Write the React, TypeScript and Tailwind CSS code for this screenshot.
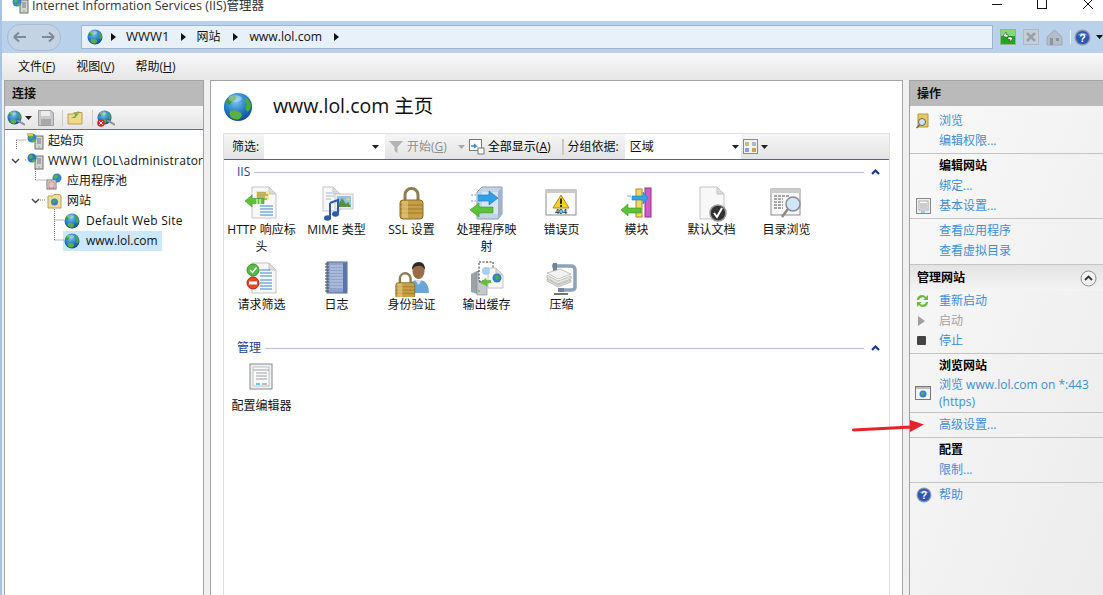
import React, { useId } from "react";

const Globe = ({ size = 16 }: { size?: number }) => {
  const id = useId();
  return (
    <svg width={size} height={size} viewBox="0 0 32 32" className="shrink-0">
      <defs>
        <radialGradient id={id} cx="0.42" cy="0.3" r="0.8">
          <stop offset="0" stopColor="#7cc6ee" />
          <stop offset="0.55" stopColor="#1f77c4" />
          <stop offset="1" stopColor="#0c3d86" />
        </radialGradient>
      </defs>
      <circle cx="16" cy="16" r="15" fill={`url(#${id})`} />
      <path d="M6 6 Q11 3 14 5 L13 9 Q9 9 8 13 Q5 14 3 12 Q4 8 6 6Z" fill="#3f9a33" />
      <path d="M24 5 Q29 9 30 15 Q29 20 26 21 Q23 17 25 13 Q22 9 24 5Z" fill="#4ea83a" />
      <path d="M8 20 Q14 18 19 22 Q22 25 17 29 Q11 30 8 26 Q6 23 8 20Z" fill="#5cb040" />
      <ellipse cx="13" cy="7" rx="7" ry="3.5" fill="#fff" opacity="0.35" />
    </svg>
  );
};

const Doc = ({ x = 8, y = 1, w = 22, h = 30 }: { x?: number; y?: number; w?: number; h?: number }) => (
  <g>
    <path d={`M${x} ${y}H${x + w - 7}L${x + w} ${y + 7}V${y + h}H${x}Z`} fill="#f8f8f8" stroke="#c4c4c4" />
    <path d={`M${x + w - 7} ${y}V${y + 7}H${x + w}Z`} fill="#dcdcdc" stroke="#c4c4c4" />
  </g>
);

const Ic32 = ({ children }: { children: React.ReactNode }) => (
  <svg width={36} height={36} viewBox="0 0 36 36" className="shrink-0">
    {children}
  </svg>
);

const LockShape = ({ x, y, s = 1 }: { x: number; y: number; s?: number }) => (
  <g transform={`translate(${x} ${y}) scale(${s})`}>
    <path d="M6 14V8a6.500 6.500 0 0 1 13 0v6" fill="none" stroke="#8c7d55" strokeWidth="3" />
    <rect x="1" y="13" width="23" height="19" rx="3" fill="#c79f45" stroke="#8b6a25" />
    <path d="M1 18H24M1 22H24M1 26H24" stroke="#8b6a25" strokeWidth="1" opacity="0.7" />
    <rect x="3" y="14" width="6" height="17" fill="#e8cd85" opacity="0.6" />
  </g>
);

const HttpIcon = () => (
  <Ic32>
    <Doc x={8} y={1} w={24} h={31} />
    <rect x="12" y="5" width="13" height="9" fill="#f4e79a" />
    <path d="M13 7H22M13 9H24M13 11H21M13 13H23" stroke="#8c7a2c" strokeWidth="1" />
    <path d="M16 20H29M16 23H29M16 26H29M16 29H29" stroke="#3a84c8" strokeWidth="1" />
    <path d="M1 15L8 9V12.500H20V17.500H8V21Z" fill="#5cc238" stroke="#3c9422" strokeWidth="0.6" />
    <path d="M13 13V18M16 13V18" stroke="#fff" strokeWidth="1" />
  </Ic32>
);

const MimeIcon = () => (
  <Ic32>
    <Doc x={4} y={1} w={17} h={24} />
    <path d="M7 7H13M7 10H15M7 13H12" stroke="#9db9d6" strokeWidth="1" />
    <rect x="16" y="8" width="18" height="15" fill="#f4f4f4" stroke="#c8c8c8" />
    <rect x="18" y="10" width="14" height="11" fill="#8fc2e8" />
    <path d="M18 21L23 12L27 18L29 16L32 21Z" fill="#55943c" />
    <circle cx="29" cy="13" r="1.500" fill="#f3d45c" />
    <path d="M11 17L19 14V27M11 17V33" fill="none" stroke="#2b5cab" strokeWidth="2" />
    <ellipse cx="8.500" cy="32" rx="3.500" ry="2.800" fill="#2b5cab" />
    <ellipse cx="16.500" cy="28" rx="3.500" ry="2.800" fill="#2b5cab" />
  </Ic32>
);

const SslIcon = () => (
  <Ic32>
    <LockShape x={5} y={1} s={1} />
  </Ic32>
);

const HandlerIcon = () => (
  <Ic32>
    <path d="M8 6L13 1H33V28L29 33H8Z" fill="#c5d4e4" stroke="#8aa0b8" />
    <path d="M13 6H29V28H13Z" fill="#d9e5f2" />
    <path d="M29 6L33 1V28L29 33Z" fill="#9fb4cb" />
    <path d="M2 9H4M5.500 9H7M9 9H20V5L29 12L20 19V15H9M2 15H4M5.500 15H7" fill="#2f9fe8" stroke="#1c7fc8" strokeWidth="0.7" />
    <path d="M1 24L10 17V21H24V27H10V31Z" fill="#5cc238" stroke="#3c9422" strokeWidth="0.6" />
  </Ic32>
);

const ErrIcon = () => (
  <Ic32>
    <rect x="2" y="4" width="30" height="25" fill="#fafafa" stroke="#8f8f8f" />
    <rect x="2" y="4" width="30" height="3" fill="#c9c9c9" />
    <path d="M17 9L25 22H9Z" fill="#f7d02c" stroke="#b08b10" />
    <path d="M17 12.500V18M17 19V21" stroke="#222" strokeWidth="1.800" />
    <text x="17" y="28.300" textAnchor="middle" fontSize="7" fontWeight="700" fill="#333" fontFamily="'Liberation Sans', sans-serif">404</text>
  </Ic32>
);

const ModuleIcon = () => (
  <Ic32>
    <rect x="17" y="3" width="6" height="28" fill="#f3d766" stroke="#a98c22" />
    <rect x="26" y="2" width="6" height="29" fill="#d35bc6" stroke="#8f2e88" />
    <path d="M8 10H12M13 10H24V6L29 12L24 18V14H13Z" fill="#2fa6ea" stroke="#1b7dc3" strokeWidth="0.6" />
    <path d="M2 24L9 18V22H22V27H9V30Z" fill="#5cc238" stroke="#3c9422" strokeWidth="0.6" />
  </Ic32>
);

const DefDocIcon = () => (
  <Ic32>
    <Doc x={6} y={1} w={24} h={32} />
    <circle cx="24" cy="27" r="8" fill="#333" stroke="#9a9a9a" strokeWidth="1.500" />
    <path d="M20 27L23 31L28 22" fill="none" stroke="#fff" strokeWidth="2" />
  </Ic32>
);

const DirIcon = () => (
  <Ic32>
    <rect x="2" y="3" width="29" height="26" fill="#f7f7f7" stroke="#8c8c8c" />
    <rect x="2" y="3" width="29" height="4" fill="#cbcbcb" />
    <path d="M5 10H21M5 13H14M5 16H14M5 19H14M5 22H14" stroke="#555" strokeWidth="1" strokeDasharray="3 1" />
    <circle cx="24" cy="18" r="7" fill="#cfe6f7" stroke="#8c8c8c" strokeWidth="1.500" />
    <path d="M19 23L13 31" stroke="#8a8a8a" strokeWidth="2.500" />
  </Ic32>
);

const FilterIcon = () => (
  <Ic32>
    <Doc x={8} y={2} w={24} h={30} />
    <path d="M16 9H26M16 12H28M16 15H28M16 19H28M16 22H28M16 25H28M16 28H28" stroke="#3a84c8" strokeWidth="1" />
    <circle cx="9" cy="9" r="6" fill="#5ab947" stroke="#3d8c2f" />
    <path d="M6 9L8.500 11.500L12.500 6.500" fill="none" stroke="#fff" strokeWidth="1.500" />
    <circle cx="9" cy="22" r="6" fill="#e24a2e" stroke="#a92b15" />
    <rect x="5" y="20.500" width="8" height="3" fill="#fff" />
  </Ic32>
);

const LogIcon = () => (
  <Ic32>
    <rect x="8" y="1" width="20" height="31" fill="#8ea4cd" stroke="#55689a" />
    <rect x="24" y="2" width="4" height="30" fill="#5e74a6" />
    <path d="M11 5H24M11 8H24M11 11H24M11 14H24M11 17H24M11 20H24M11 23H24M11 26H24" stroke="#c4d0e6" strokeWidth="1" />
    <path d="M6 3H10M6 6H10M6 9H10M6 12H10M6 15H10M6 18H10M6 21H10M6 24H10M6 27H10M6 30H10" stroke="#444" strokeWidth="1.200" />
  </Ic32>
);

const AuthIcon = () => (
  <Ic32>
    <path d="M14 32Q14 20 22 19H27Q35 21 35 32Z" fill="#6da5d6" />
    <path d="M21 19L24.500 24L28 19Z" fill="#cfe3f3" />
    <ellipse cx="24.500" cy="10" rx="6" ry="8" fill="#9a6b45" />
    <path d="M18 9Q18 1 25 1Q31 1 31 9Q28 4 24 5Q20 5 18 9Z" fill="#2d2a28" />
    <LockShape x={1} y={11} s={0.82} />
  </Ic32>
);

const CacheIcon = () => (
  <Ic32>
    <path d="M2 13L8 10H14V33H8L2 31Z" fill="#9aa1a8" />
    <rect x="8" y="11" width="10" height="23" fill="#c3c8cd" stroke="#80878f" strokeWidth="0.6" />
    <path d="M10 15H16M10 18H16M10 21H16" stroke="#72797f" />
    <circle cx="10" cy="30" r="1" fill="#6fc23c" />
    <rect x="10" y="1" width="14" height="19" fill="#fff" stroke="#333" strokeDasharray="2 1.500" />
    <Doc x={19} y={7} w={15} h={20} />
    <circle cx="17" cy="10" r="4" fill="#a8cfe8" />
    <circle cx="28" cy="17" r="4.500" fill="#2e82c4" />
    <path d="M26 15L29 14L30 18L27 19Z" fill="#55ad3a" />
    <path d="M11 21L18 26V23H22V20H18V17Z" fill="#63c03b" transform="rotate(-12 16 21)" />
  </Ic32>
);

const CompressIcon = () => (
  <Ic32>
    <path d="M8 5H27Q31 5 31 9V26Q31 29 27 29H18" fill="none" stroke="#8ea3b8" strokeWidth="3.500" />
    <path d="M9 2H13V10H9Z" fill="#6f8398" />
    <path d="M3 12L16 8L27 13L14 18Z" fill="#f3f3f3" stroke="#aaa" strokeWidth="0.7" />
    <path d="M3 14L14 20L27 15V18L14 23L3 17Z" fill="#e6e6d8" stroke="#aaa" strokeWidth="0.7" />
    <path d="M3 18L14 24L27 19V21L14 26L3 20Z" fill="#dfdfdf" stroke="#aaa" strokeWidth="0.7" />
    <path d="M14 27H20V31H14Z" fill="#73889c" />
    <path d="M10 33H24" stroke="#444" strokeWidth="1.500" />
  </Ic32>
);

const ConfigIcon = () => (
  <Ic32>
    <rect x="6" y="2" width="22" height="25" fill="#eff1f3" stroke="#888" />
    <rect x="9" y="5" width="16" height="19" fill="#fafafa" stroke="#a9a9a9" strokeWidth="0.7" />
    <path d="M9 8H25M12 11H23M12 14H23M12 17H23" stroke="#9aa2a8" strokeWidth="1" />
    <path d="M12 22H16" stroke="#25bdf0" strokeWidth="1.500" />
    <path d="M18 22H23" stroke="#a6a6a6" strokeWidth="1.500" />
  </Ic32>
);

const ServerIcon = ({ badge }: { badge?: boolean }) => (
  <svg width={17} height={17} viewBox="0 0 17 17" className="shrink-0">
    <rect x="8" y="3" width="8" height="13" fill="#d4d4d4" stroke="#6f6f6f" />
    <path d="M10 6H14M10 8H14M10 10H14" stroke="#777" />
    <circle cx="12" cy="14" r="0.800" fill="#59c13b" />
    <circle cx="5" cy="5" r="4.500" fill={badge ? "#2f86cf" : "#2379c4"} />
    <path d="M2 3L5 1.500L6 4L3 6.500ZM5 7L8 6V8.500L5.500 9.500Z" fill="#5fb13c" />
    {badge && <rect x="0" y="0" width="6" height="3" fill="#f0c330" />}
  </svg>
);

const PoolIcon = () => (
  <svg width={17} height={17} viewBox="0 0 17 17" className="shrink-0">
    <circle cx="11" cy="5" r="4.500" fill="#2f86cf" />
    <path d="M8 3L11 1.500L12 4L9 6.500Z" fill="#5fb13c" />
    <rect x="1" y="7" width="9" height="9" fill="#efefef" stroke="#777" />
    <rect x="3" y="9" width="5" height="6" fill="#fff" stroke="#b8463a" strokeWidth="0.800" />
    <path d="M4 11H7M4 13H7" stroke="#999" />
  </svg>
);

const SitesIcon = () => (
  <svg width={16} height={16} viewBox="0 0 16 16" className="shrink-0">
    <path d="M1 3H6L7 1.500H13L14 3V15H1Z" fill="#f2dc98" stroke="#b8a05a" />
    <circle cx="7.500" cy="9" r="3.500" fill="#2f86cf" />
    <path d="M5.500 8L8 6.500L8.500 9L6 10Z" fill="#5fb13c" />
  </svg>
);

const Chevron = () => (
  <svg width={9} height={6} viewBox="0 0 9 6" className="shrink-0 ml-[2px]">
    <path d="M1 1L4.500 4.500L8 1" fill="none" stroke="#444" strokeWidth="1.400" />
  </svg>
);

const Tri = () => (
  <svg width={5} height={8} viewBox="0 0 5 8" className="shrink-0">
    <path d="M0 0L5 4L0 8Z" fill="#111" />
  </svg>
);

const Caret = ({ color = "#222" }: { color?: string }) => (
  <svg width={7} height={4} viewBox="0 0 7 4" className="shrink-0">
    <path d="M0 0H7L3.500 4Z" fill={color} />
  </svg>
);

const UpChevron = () => (
  <svg width={9} height={7} viewBox="0 0 9 7" className="shrink-0">
    <path d="M1 5L4.500 1.500L8 5" fill="none" stroke="#153a8f" strokeWidth="2.200" />
  </svg>
);

const HelpOrb = ({ size = 16 }: { size?: number }) => (
  <svg width={size} height={size} viewBox="0 0 16 16" className="shrink-0">
    <circle cx="8" cy="8" r="7.500" fill="#8e99a8" />
    <circle cx="8" cy="8" r="6.200" fill="#2f55b5" />
    <path d="M3 6Q8 1 13 6Q8 5 3 6Z" fill="#8ea8e6" />
    <text x="8" y="12" textAnchor="middle" fontSize="10" fontWeight="700" fill="#fff" fontFamily="'Liberation Sans', sans-serif">?</text>
  </svg>
);

const SmallPlug = () => (
  <svg width={8} height={6} viewBox="0 0 8 6" className="absolute right-[-3px] bottom-[-1px]">
    <path d="M0 0L8 5" stroke="#8a94a0" strokeWidth="2" />
  </svg>
);

const TreeRow = ({ pad, chev, icon, label, sel, wide, labelGap }: { pad: number; chev?: boolean; icon: React.ReactNode; label: string; sel?: boolean; wide?: boolean; labelGap?: boolean }) => (
  <div className="h-5 flex items-center whitespace-nowrap" style={{ paddingLeft: pad }}>
    <span className="w-[17px] flex items-center justify-start shrink-0">{chev && <Chevron />}</span>
    <span className={`flex items-center h-5 pl-[1px] pr-[4px] ${sel ? "bg-[#cce8ff]" : ""}`}>
      <span className="flex items-center shrink-0">{icon}</span>
      <span className={`${labelGap ? "ml-[6px]" : "ml-[4px]"} leading-5 ${wide ? "tracking-[0.25px]" : ""}`}>{label}</span>
    </span>
  </div>
);

const Feature = ({ icon, lines }: { icon: React.ReactNode; lines: string[] }) => (
  <div className="w-[75px] flex flex-col items-center text-center leading-[17px]">
    <div className="h-9 flex items-center justify-center">{icon}</div>
    <div className="-mt-[1px] whitespace-nowrap">
      {lines.map((l) => (
        <div key={l}>{l}</div>
      ))}
    </div>
  </div>
);

const Section = ({ title }: { title: string }) => (
  <div className="h-[14px] flex items-center gap-[4px] pl-[13px] pr-[9px]">
    <span className="text-[#1c3f94] leading-[14px]">{title}</span>
    <div className="flex-1 h-px bg-[#b4bfd8]" />
    <span className="ml-[3px]"><UpChevron /></span>
  </div>
);

const ActLink = ({ icon, label, muted }: { icon?: React.ReactNode; label: string; muted?: boolean }) => (
  <div className="h-5 flex items-center">
    <span className="w-[29px] pl-[6px] flex items-center shrink-0">{icon}</span>
    <span className={muted ? "text-[#a3a3a3]" : "text-[#3c8fd6]"}>{label}</span>
  </div>
);

const ActHead = ({ label }: { label: string }) => (
  <div className="h-[20px] flex items-center pl-[29px] font-bold text-black">{label}</div>
);

const Sep = () => <div className="h-px bg-[#c4c4c4] my-[2px]" />;

export default function App() {
  return (
    <div className="relative w-[1103px] h-[595px] overflow-hidden bg-white text-[12px] text-[#111] font-['Open_Sans','Noto_Sans_CJK_SC',sans-serif] flex flex-col">
      {/* Title */}
      <div className="h-[21px] bg-white flex items-start shrink-0">
        <div className="w-[2px] self-stretch bg-[#a9c4e2]" />
        <div className="ml-[10px] -mt-[3px]"><ServerIcon badge /></div>
        <div className="ml-[3px] -mt-[2px] text-[12.5px] leading-[16px] text-[#333]">Internet Information Services (IIS)管理器</div>
        <div className="ml-auto flex items-start -mt-[1px]">
          <svg width={112} height={14} viewBox="0 0 112 14">
            <path d="M1 5.500H11" stroke="#111" />
            <rect x="46.500" y="0.500" width="9" height="9" fill="none" stroke="#111" />
            <path d="M92 0L102 10M102 0L92 10" stroke="#111" />
          </svg>
        </div>
      </div>

      {/* Nav bar */}
      <div className="h-[32px] shrink-0 bg-[#b9d1ea] flex items-center pl-[2px] border-l-2 border-[#a9c4e2]">
        <div className="ml-[3px] w-[54px] h-[27px] rounded-[13px] bg-[#c4d3e4] border border-[#a9bbd0] flex items-center justify-between px-[5px]">
          <svg width={14} height={12} viewBox="0 0 14 12"><path d="M1 6H13M1 6L6 1.500M1 6L6 10.500" fill="none" stroke="#7f8a96" strokeWidth="2" /></svg>
          <svg width={14} height={12} viewBox="0 0 14 12"><path d="M1 6H13M13 6L8 1.500M13 6L8 10.500" fill="none" stroke="#7f8a96" strokeWidth="2" /></svg>
        </div>
        <div className="ml-[20px] w-[913px] h-[24px] bg-[#e8f0f9] border border-[#a0b4ca] flex items-center pl-[5px]">
          <Globe size={16} />
          <span className="ml-[8px]"><Tri /></span>
          <span className="ml-[10px] text-[13px]">WWW1</span>
          <span className="ml-[12px]"><Tri /></span>
          <span className="ml-[10px] text-[12px]">网站</span>
          <span className="ml-[13px]"><Tri /></span>
          <span className="ml-[11px] text-[12.2px]">www.lol.com</span>
          <span className="ml-[12px]"><Tri /></span>
        </div>
        <div className="ml-[7px] flex items-center">
          <svg width={16} height={16} viewBox="0 0 16 16" className="shrink-0">
            <rect x="0.500" y="0.500" width="15" height="15" fill="#22a51f" stroke="#8fb88f" />
            <rect x="1" y="1" width="14" height="6" fill="#7ddc78" />
            <path d="M3 7L6 3V5.500H8V8H5.500ZM13 9L10 13V10.500H8V8H10.500Z" fill="#fff" stroke="#333" strokeWidth="0.500" />
          </svg>
          <svg width={16} height={16} viewBox="0 0 16 16" className="ml-[7px] shrink-0">
            <rect x="0.500" y="0.500" width="15" height="15" fill="#c6ced7" stroke="#afb7c1" />
            <path d="M4 4L12 12M12 4L4 12" stroke="#98a1ab" strokeWidth="2.500" />
          </svg>
          <svg width={17} height={17} viewBox="0 0 17 17" className="ml-[7px] shrink-0">
            <path d="M8.500 1L16 8V16H1V8Z" fill="#b4bec9" stroke="#a0a9b4" />
            <rect x="4" y="9" width="3" height="7" fill="#8a949f" />
            <rect x="10" y="9" width="3" height="3" fill="#8a949f" />
          </svg>
          <div className="ml-[7px] w-px h-[14px] bg-[#eef3f9]" />
          <span className="ml-[3px]"><HelpOrb size={17} /></span>
          <span className="ml-[5px]"><Caret color="#111" /></span>
        </div>
      </div>

      {/* Menu */}
      <div className="h-[27px] shrink-0 flex items-center bg-gradient-to-b from-[#f8f8f8] to-[#e6e6e6] border-l-2 border-[#a9c4e2] pl-[16px] text-[12px]">
        <span>文件(<u>F</u>)</span>
        <span className="ml-[21px]">视图(<u>V</u>)</span>
        <span className="ml-[21px]">帮助(<u>H</u>)</span>
      </div>

      {/* Main */}
      <div className="flex-1 min-h-0 flex bg-[#f0f0f0] border-l-2 border-[#a9c4e2]">
        {/* Connections */}
        <div className="w-[200px] ml-[2px] mr-[6px] flex flex-col border-x border-t border-[#a3a3a3] bg-white overflow-hidden shrink-0">
          <div className="h-[25px] shrink-0 bg-[#bababa] flex items-center pl-[7px] pt-[1px] font-bold">连接</div>
          <div className="h-[24px] shrink-0 bg-gradient-to-b from-[#f6f6f6] to-[#e4e4e4] border-b border-[#6b6f84] flex items-center pl-[2px]">
            <span className="relative"><Globe size={15} /><SmallPlug /></span>
            <span className="ml-[3px]"><Caret /></span>
            <svg width={16} height={16} viewBox="0 0 16 16" className="ml-[6px] shrink-0">
              <path d="M0.500 0.500H13L15.500 3V15.500H0.500Z" fill="#c9c9c9" stroke="#9e9e9e" />
              <rect x="3" y="1" width="9" height="5" fill="#ececec" />
              <rect x="3" y="9" width="10" height="6" fill="#a9a9a9" />
            </svg>
            <div className="ml-[8px] w-px h-[16px] bg-[#cfcfbf]" />
            <svg width={16} height={16} viewBox="0 0 16 16" className="ml-[4px] shrink-0">
              <path d="M1 4H6L7 2.500H15V14H1Z" fill="#f0d78a" stroke="#b8a05a" />
              <path d="M4 8L8 6L7 3L12 3.500L10 1L13 2L8 8Z" fill="#63b53b" />
            </svg>
            <div className="ml-[9px] w-px h-[16px] bg-[#cfcfbf]" />
            <span className="relative ml-[4px]">
              <Globe size={15} />
              <SmallPlug />
              <svg width={8} height={8} viewBox="0 0 8 8" className="absolute left-0 bottom-[-2px]">
                <circle cx="4" cy="4" r="3.800" fill="#d1272d" />
                <path d="M2.300 2.300L5.700 5.700M5.700 2.300L2.300 5.700" stroke="#fff" />
              </svg>
            </span>
          </div>
          <div className="relative pt-[1px] flex-1 overflow-hidden">
            <svg width={70} height={120} viewBox="0 0 70 120" className="absolute left-0 top-0">
              <path d="M11.500 10V19M11.500 10H21M20 30H22M30.500 39V50M30.500 50H41M33 70H41M49.500 79V110M49.500 90H59M49.500 110H59" fill="none" stroke="#777" strokeDasharray="1 1" />
            </svg>
            <TreeRow pad={4} icon={<ServerIcon badge />} label="起始页" />
            <TreeRow pad={4} chev icon={<ServerIcon />} label="WWW1 (LOL\administrator)" wide />
            <TreeRow pad={23} icon={<PoolIcon />} label="应用程序池" />
            <TreeRow pad={24} chev icon={<SitesIcon />} label="网站" />
            <TreeRow pad={41} icon={<Globe size={16} />} label="Default Web Site" wide labelGap />
            <TreeRow pad={41} icon={<Globe size={16} />} label="www.lol.com" sel labelGap />
          </div>
        </div>

        {/* Center */}
        <div className="w-[693px] shrink-0 bg-white border-x border-t border-[#a3a3a3] flex flex-col">
          <div className="h-[52px] shrink-0 flex items-center pl-[12px]">
            <Globe size={30} />
            <span className="ml-[20px] -mt-[2px] text-[19.5px] text-[#111] leading-[24px]">www.lol.com 主页</span>
          </div>
          <div className="mx-[12px] flex-1 border-x border-t border-[#dfdfdf] flex flex-col">
            <div className="h-[26px] shrink-0 flex items-center bg-gradient-to-b from-[#f6f6f6] to-[#e3e3e3] border-b border-[#5d6080]">
              <span className="w-[40px] pl-[8px] shrink-0">筛选:</span>
              <div className="w-[121px] h-full bg-white flex items-center justify-end pr-[6px] shrink-0"><Caret /></div>
              <svg width={14} height={13} viewBox="0 0 14 13" className="ml-[4px] shrink-0"><path d="M0 1H14L8.500 7V13L5.500 11V7Z" fill="#b3b3b3" /></svg>
              <span className="ml-[4px] text-[#8f8f8f]">开始(<u>G</u>)</span>
              <span className="ml-[11px]"><Caret color="#a8a8a8" /></span>
              <svg width={16} height={16} viewBox="0 0 16 16" className="ml-[4px] shrink-0">
                <rect x="0.500" y="0.500" width="12" height="11" fill="#fff" stroke="#777" />
                <rect x="9" y="9" width="6" height="6" fill="#fff" stroke="#777" />
                <path d="M2 7H7L5 5M7 7L5 9" fill="none" stroke="#2a8fd8" strokeWidth="1.400" />
              </svg>
              <span className="ml-[3px] text-black">全部显示(<u>A</u>)</span>
              <div className="ml-[11px] w-[2px] h-[16px] bg-[#c9c9bd]" />
              <span className="ml-[4px]">分组依据:</span>
              <div className="ml-[6px] w-[116px] h-full bg-white flex items-center justify-between pl-[5px] pr-[2px] shrink-0">
                <span>区域</span>
                <Caret />
              </div>
              <svg width={15} height={15} viewBox="0 0 15 15" className="ml-[2px] shrink-0">
                <rect x="0.500" y="0.500" width="14" height="14" fill="#f3f3f3" stroke="#8a8a8a" />
                <rect x="2" y="3" width="4" height="4" fill="#c9c06a" />
                <rect x="9" y="3" width="4" height="4" fill="#a8b8d8" />
                <rect x="2" y="9" width="4" height="4" fill="#8aa0d8" />
                <rect x="9" y="9" width="4" height="4" fill="#d89a5a" />
              </svg>
              <span className="ml-[3px]"><Caret /></span>
            </div>
            <div className="pt-[5px]">
              <Section title="IIS" />
              <div className="pt-[7px] grid grid-cols-[repeat(8,75px)] auto-rows-[75px] justify-start">
                <Feature icon={<HttpIcon />} lines={["HTTP 响应标", "头"]} />
                <Feature icon={<MimeIcon />} lines={["MIME 类型"]} />
                <Feature icon={<SslIcon />} lines={["SSL 设置"]} />
                <Feature icon={<HandlerIcon />} lines={["处理程序映", "射"]} />
                <Feature icon={<ErrIcon />} lines={["错误页"]} />
                <Feature icon={<ModuleIcon />} lines={["模块"]} />
                <Feature icon={<DefDocIcon />} lines={["默认文档"]} />
                <Feature icon={<DirIcon />} lines={["目录浏览"]} />
                <Feature icon={<FilterIcon />} lines={["请求筛选"]} />
                <Feature icon={<LogIcon />} lines={["日志"]} />
                <Feature icon={<AuthIcon />} lines={["身份验证"]} />
                <Feature icon={<CacheIcon />} lines={["输出缓存"]} />
                <Feature icon={<CompressIcon />} lines={["压缩"]} />
              </div>
              <div className="mt-[5px]"><Section title="管理" /></div>
              <div className="pt-[7px] grid grid-cols-[repeat(8,75px)] justify-start">
                <Feature icon={<ConfigIcon />} lines={["配置编辑器"]} />
              </div>
            </div>
          </div>
        </div>

        <div className="w-[6px] shrink-0" />

        {/* Actions */}
        <div className="flex-1 min-w-0 border-l border-t border-[#a3a3a3] flex flex-col bg-gradient-to-br from-[#f9f9f9] to-[#ececec] text-[#3c8fd6]">
          <div className="h-[25px] shrink-0 bg-[#bababa] flex items-center pl-[7px] font-bold text-[#111]">操作</div>
          <div className="pt-[5px] flex flex-col">
            <ActLink label="浏览" icon={
              <svg width={16} height={16} viewBox="0 0 16 16"><path d="M2 1H12V14H2Z" fill="#eac862" stroke="#b8963a" /><circle cx="6" cy="9" r="3.500" fill="#cfe3f2" stroke="#666" /><path d="M3.500 12L0.500 15" stroke="#666" strokeWidth="1.500" /></svg>
            } />
            <ActLink label="编辑权限..." />
            <Sep />
            <ActHead label="编辑网站" />
            <ActLink label="绑定..." />
            <ActLink label="基本设置..." icon={
              <svg width={15} height={16} viewBox="0 0 15 16"><rect x="0.500" y="0.500" width="14" height="15" fill="#efefef" stroke="#888" /><rect x="3" y="3" width="9" height="9" fill="#fff" stroke="#aaa" /><path d="M4 6H11M4 8H11M4 10H11" stroke="#999" /><path d="M5 14H9" stroke="#25bdf0" /></svg>
            } />
            <Sep />
            <ActLink label="查看应用程序" />
            <ActLink label="查看虚拟目录" />
            <div className="h-px bg-[#c4c4c4] mt-[3px]" />
            <div className="h-[26px] flex items-center justify-between pl-[7px] pr-[6px] font-bold text-black bg-gradient-to-b from-[#e3e3e3] to-[#f4f4f4]">
              <span>管理网站</span>
              <svg width={17} height={17} viewBox="0 0 17 17" className="shrink-0">
                <circle cx="8.500" cy="8.500" r="7.500" fill="#f2f2f2" stroke="#8c8c8c" />
                <path d="M5 10L8.500 6.500L12 10" fill="none" stroke="#333" strokeWidth="1.800" />
              </svg>
            </div>
            <ActLink label="重新启动" icon={
              <svg width={13} height={14} viewBox="0 0 13 14"><path d="M1 6A5 5 0 0 1 10 3L12 1V6H7L9 4.500A3.500 3.500 0 0 0 3 6Z" fill="#6dbb3e" /><path d="M12 8A5 5 0 0 1 3 11L1 13V8H6L4 9.500A3.500 3.500 0 0 0 10 8Z" fill="#6dbb3e" /></svg>
            } />
            <ActLink muted label="启动" icon={
              <svg width={13} height={12} viewBox="0 0 13 12"><path d="M2 1L9 6L2 11Z" fill="#9f9f9f" /></svg>
            } />
            <ActLink label="停止" icon={
              <svg width={13} height={12} viewBox="0 0 13 12"><rect x="1" y="1" width="9" height="9" rx="1" fill="#444" /></svg>
            } />
            <Sep />
            <ActHead label="浏览网站" />
            <div className="flex items-center h-[35px] -mt-[1px]">
              <span className="w-[29px] pl-[5px] flex items-center shrink-0">
                <svg width={16} height={14} viewBox="0 0 16 14"><rect x="0.500" y="0.500" width="15" height="13" fill="#f4f4f4" stroke="#777" /><rect x="1" y="1" width="14" height="2" fill="#bdbdbd" /><circle cx="8" cy="8" r="3.500" fill="#2f86cf" /><path d="M6 7L8.500 5.500L9 8L6.500 9.500Z" fill="#5fb13c" /></svg>
              </span>
              <span className="leading-[17px]">浏览 www.lol.com on *:443<br />(https)</span>
            </div>
            <Sep />
            <ActLink label="高级设置..." />
            <Sep />
            <ActHead label="配置" />
            <ActLink label="限制..." />
            <Sep />
            <ActLink label="帮助" icon={<HelpOrb size={16} />} />
          </div>
        </div>
      </div>

      {/* Annotation arrow */}
      <svg width={75} height={14} viewBox="0 0 75 14" className="absolute left-[852px] top-[420px]">
        <path d="M1.500 10L60 7" stroke="#e8222b" strokeWidth="3" strokeLinecap="round" />
        <path d="M58 0L72 4.500L58 12Z" fill="#e8222b" />
      </svg>
    </div>
  );
}
